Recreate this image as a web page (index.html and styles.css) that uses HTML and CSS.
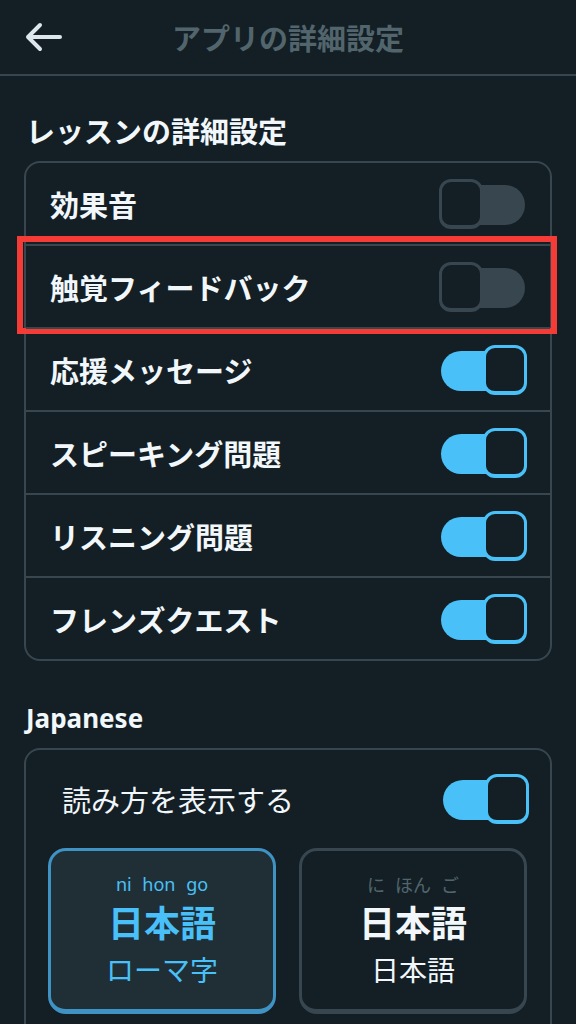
FILE: index.html
```html
<!DOCTYPE html>
<html lang="ja">
<head>
    <meta charset="UTF-8">
    <title>アプリの詳細設定</title>
    <link rel="stylesheet" href="styles.css">
</head>

<body>
    <!-- ヘッダー -->
    <header class="topbar">
        <div class="back">
            <svg width="40" height="32" viewBox="0 0 40 32">
                <path d="M37 16 H5 M17 4 L5 16 L17 28" fill="none" stroke="#dce6ec" stroke-width="4" stroke-linecap="round" stroke-linejoin="round"/>
            </svg>
        </div>
        <h1 class="title">アプリの詳細設定</h1>
        <div></div>
    </header>

    <!-- レッスン -->
    <h2 class="section-title">レッスンの詳細設定</h2>
    <div class="card">
        <div class="row">
            <span class="label">効果音</span>
            <span class="toggle"><span class="knob"></span></span>
        </div>
        <div class="row marked">
            <span class="label">触覚フィードバック</span>
            <span class="toggle"><span class="knob"></span></span>
        </div>
        <div class="row">
            <span class="label">応援メッセージ</span>
            <span class="toggle on"><span class="knob"></span></span>
        </div>
        <div class="row">
            <span class="label">スピーキング問題</span>
            <span class="toggle on"><span class="knob"></span></span>
        </div>
        <div class="row">
            <span class="label">リスニング問題</span>
            <span class="toggle on"><span class="knob"></span></span>
        </div>
        <div class="row">
            <span class="label">フレンズクエスト</span>
            <span class="toggle on"><span class="knob"></span></span>
        </div>
    </div>

    <!-- Japanese -->
    <h2 class="section-title latin">Japanese</h2>
    <div class="card card-jp">
        <div class="jp-row">
            <span class="jp-label">読み方を表示する</span>
            <span class="toggle on"><span class="knob"></span></span>
        </div>
        <div class="options">
            <div class="option selected">
                <div class="ruby latin">ni hon go</div>
                <div class="word">日本語</div>
                <div class="sub">ローマ字</div>
            </div>
            <div class="option">
                <div class="ruby">に ほん ご</div>
                <div class="word">日本語</div>
                <div class="sub">日本語</div>
            </div>
        </div>
    </div>
</body>

</html>
```

FILE: styles.css
```css
/* 基本 */
body {
    font-family: "Noto Sans CJK JP", "Noto Sans", sans-serif;
    background-color: #131f24;
    color: #f1f7fb;
    margin: 0;
    padding: 0;
}

.latin {
    font-family: "Noto Sans", "Noto Sans CJK JP", sans-serif;
}

/* ヘッダー */
.topbar {
    height: 74px;
    border-bottom: 2px solid #37464f;
    display: grid;
    grid-template-columns: 1fr auto 1fr;
    align-items: center;
}

.back {
    padding-left: 23px;
    display: flex;
    align-items: center;
}

.title {
    margin: 0;
    font-size: 29px;
    font-weight: bold;
    color: #52656d;
    line-height: 40px;
}

/* セクション見出し */
.section-title {
    margin: 34px 26px 11px;
    font-size: 29px;
    font-weight: bold;
    line-height: 40px;
}

.section-title.latin {
    margin: 40px 26px 13px;
    font-size: 26px;
    line-height: 34px;
}

/* カード */
.card {
    margin: 0 24px;
    border: 2px solid #37464f;
    border-radius: 16px;
}

.row {
    height: 81px;
    padding: 0 23px 0 24px;
    display: flex;
    align-items: center;
    justify-content: space-between;
    border-top: 2px solid #37464f;
    position: relative;
}

.row:first-child {
    border-top: none;
}

.label {
    font-size: 29px;
    font-weight: bold;
}

/* 赤枠 */
.row.marked::after {
    content: "";
    position: absolute;
    left: -9px;
    right: -7px;
    top: -10px;
    bottom: -7px;
    border: 6px solid #f43b36;
}

/* トグル */
.toggle {
    width: 88px;
    height: 50px;
    position: relative;
    display: block;
}

.toggle::before {
    content: "";
    position: absolute;
    left: 2px;
    right: 2px;
    top: 6px;
    height: 40px;
    border-radius: 20px;
    background-color: #37464f;
}

.knob {
    position: absolute;
    left: 0;
    top: 0;
    width: 44px;
    height: 50px;
    box-sizing: border-box;
    border: 3px solid #37464f;
    border-bottom-width: 4px;
    border-radius: 12px;
    background-color: #131f24;
}

.toggle.on::before {
    background-color: #49c0f8;
    right: 16px;
}

.toggle.on .knob {
    left: auto;
    right: 0;
    border-color: #49c0f8;
}

/* Japanese カード */
.card-jp {
    padding: 0 23px 30px 22px;
}

.jp-row {
    height: 98px;
    padding: 0 0 0 14px;
    margin-right: -2px;
    display: flex;
    align-items: center;
    justify-content: space-between;
}

.jp-label {
    font-size: 29px;
    line-height: 40px;
}

.options {
    display: grid;
    grid-template-columns: 1fr 1fr;
    gap: 23px;
}

.option {
    height: 166px;
    box-sizing: border-box;
    border: 3px solid #37464f;
    border-bottom-width: 5px;
    border-radius: 18px;
    text-align: center;
    padding-top: 21px;
}

.option.selected {
    background-color: #202f36;
    border-color: #3f93c4;
    color: #49c0f8;
}

.ruby {
    font-size: 18px;
    line-height: 24px;
    color: #52656d;
    word-spacing: 6px;
}

.option.selected .ruby {
    color: #49c0f8;
}

.word {
    margin-top: 3px;
    font-size: 36px;
    font-weight: bold;
    line-height: 44px;
}

.sub {
    margin-top: 7px;
    font-size: 28px;
    line-height: 38px;
}
```
